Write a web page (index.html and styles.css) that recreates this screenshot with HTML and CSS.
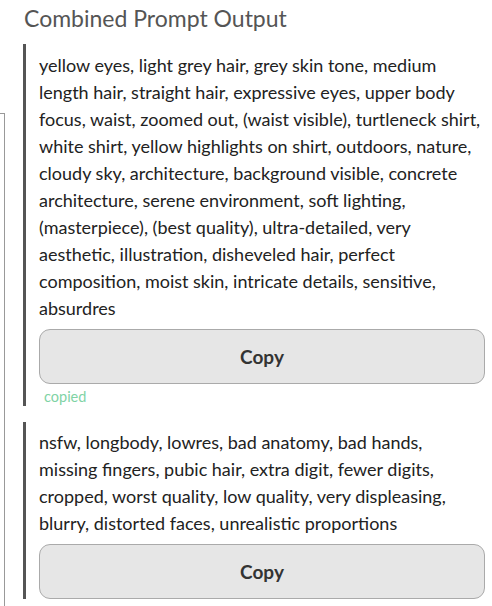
FILE: index.html
```html
<!DOCTYPE html>
<html>
<head>
<meta charset="utf-8">
<link rel="stylesheet" href="styles.css">
</head>
<body>
<div class="page">
  <div class="side"></div>
  <main class="main">
    <h2 class="title">Combined Prompt Output</h2>
    <section class="block first">
      <p class="prompt">yellow eyes, light grey hair, grey skin tone, medium<br>length hair, straight hair, expressive eyes, upper body<br>focus, waist, zoomed out, (waist visible), turtleneck shirt,<br>white shirt, yellow highlights on shirt, outdoors, nature,<br>cloudy sky, architecture, background visible, concrete<br>architecture, serene environment, soft lighting,<br>(masterpiece), (best quality), ultra-detailed, very<br>aesthetic, illustration, disheveled hair, perfect<br>composition, moist skin, intricate details, sensitive,<br>absurdres</p>
      <button class="copy">Copy</button>
      <div class="status">copied</div>
    </section>
    <section class="block">
      <p class="prompt">nsfw, longbody, lowres, bad anatomy, bad hands,<br>missing fingers, pubic hair, extra digit, fewer digits,<br>cropped, worst quality, low quality, very displeasing,<br>blurry, distorted faces, unrealistic proportions</p>
      <button class="copy">Copy</button>
    </section>
  </main>
</div>
</body>
</html>
```
FILE: styles.css
```css
html, body {
  margin: 0;
  padding: 0;
  background: #fff;
}
.page {
  display: flex;
  width: 492px;
  height: 606px;
  overflow: hidden;
}
.side {
  width: 4px;
  margin-top: 113px;
  border-top: 1px solid #999;
  border-right: 1px solid #999;
  flex: none;
}
.main {
  flex: 1;
  padding-left: 18px;
  padding-right: 7px;
}
.title {
  margin: 3px 0 11px 1px;
  font-family: "Lato", "Liberation Sans", sans-serif;
  font-weight: 400;
  font-size: 23px;
  line-height: 30px;
  color: #555;
}
.block {
  border-left: 3px solid #555;
  padding: 7px 0 0 13px;
  margin-bottom: 16px;
  display: flex;
  flex-direction: column;
}
.block.first {
  padding-top: 8px;
}
.prompt {
  margin: 0;
  font-family: "Lato", "Liberation Sans", sans-serif;
  font-size: 18px;
  line-height: 27px;
  color: #222;
}
.copy {
  margin-top: 7px;
  height: 55px;
  border: 1px solid #aaa;
  border-radius: 11px;
  background: #e6e6e6;
  font-family: "Lato", "Liberation Sans", sans-serif;
  font-weight: 700;
  font-size: 19px;
  color: #333;
}
.status {
  padding: 3px 0 0 5px;
  font-family: "Lato", "Liberation Sans", sans-serif;
  font-size: 14.5px;
  line-height: 19px;
  color: #7fd3a5;
}
```
